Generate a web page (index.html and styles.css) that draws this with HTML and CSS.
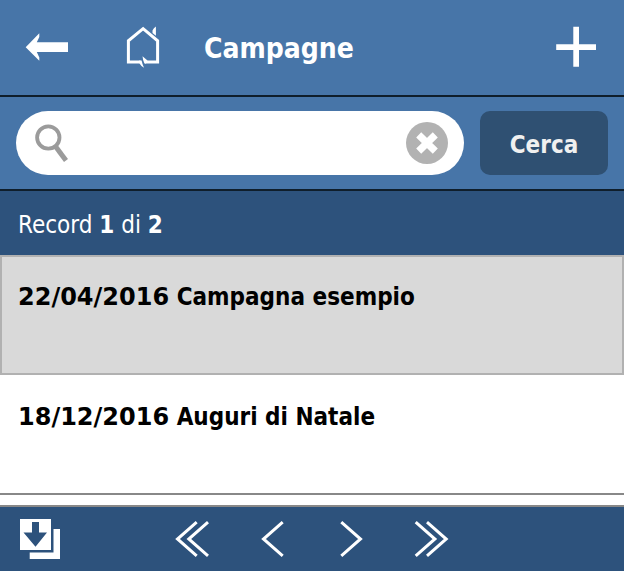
FILE: index.html
```html
<!DOCTYPE html>
<html lang="it">
<head>
<meta charset="utf-8">
<meta name="viewport" content="width=device-width, initial-scale=1">
<title>Campagne</title>
<link rel="stylesheet" href="styles.css">
</head>
<body>
<header class="topbar">
  <button class="icon-button" type="button" aria-label="Indietro">
    <svg width="60" height="48" viewBox="0 0 60 48"><path fill="#fff" d="M1.7 24.3 15.3 10.3V14L12.8 19.3H44V29H12.8L15.3 34.5V37.7Z"/></svg>
  </button>
  <button class="icon-button" type="button" aria-label="Home">
    <svg width="48" height="48" viewBox="0 0 48 48">
      <path fill="none" stroke="#fff" stroke-width="3" d="M20.5 39H8.4V17.8L23.1 5.6 37.6 17.8V39H25"/>
      <path fill="#fff" d="M22.5 33.2 27.5 37.6 26 40.5H24.4Q22.8 36.6 22.5 33.2ZM19.2 37.5H21.6Q22.4 41.5 24 44.8Q21 43.2 19.4 40.2ZM35.9 3.6V12.8L32.5 10V7.4Q33.6 5.4 35.9 3.6Z"/>
    </svg>
  </button>
  <h1 class="title">Campagne</h1>
  <button class="icon-button add" type="button" aria-label="Aggiungi">
    <svg width="48" height="48" viewBox="0 0 48 48"><path fill="#fff" d="M21.3 3.8H27V21.2H44V27H27V43.8H21.3V27H4.2V21.2H21.3Z"/></svg>
  </button>
</header>
<form class="search">
  <div class="field">
    <svg class="lens" width="36" height="40" viewBox="0 0 36 40" fill="none" stroke="#9b9b9b"><circle cx="14.3" cy="14.5" r="11.2" stroke-width="3.8"/><path stroke-width="5" d="M21 22.7 32 37.5"/></svg>
    <input class="query" type="text" aria-label="Cerca campagne">
    <button class="icon-button" type="reset" aria-label="Cancella">
      <svg width="42" height="42" viewBox="0 0 42 42"><circle cx="21" cy="21" r="21" fill="#b2b2b2"/><path stroke="#fff" stroke-width="7.2" d="M12.7 12.9 29.3 29.1M29.3 12.9 12.7 29.1"/></svg>
    </button>
  </div>
  <button class="submit" type="submit">Cerca</button>
</form>
<p class="status">Record <b>1</b> di <b>2</b></p>
<main class="records">
  <a class="record selected" href="#campagna-esempio"><span class="date">22/04/2016</span> Campagna esempio</a>
  <a class="record" href="#auguri-di-natale"><span class="date">18/12/2016</span> Auguri di Natale</a>
</main>
<footer class="toolbar">
  <button class="icon-button download" type="button" aria-label="Scarica">
    <svg width="44" height="44" viewBox="0 0 44 44"><path fill="#fff" fill-rule="evenodd" d="M2 2H33V33H2ZM14 5V15.5H5.5L17.5 29.8 29 15.5H21V5ZM35.5 12H42V42H11.7V35.5H35.5Z"/></svg>
  </button>
  <button class="icon-button" type="button" aria-label="Prima pagina">
    <svg class="chevron" width="36" height="44" viewBox="0 0 36 44"><path d="M22.7 5.2 3.5 22 22.7 38.8M34 5.2 14.8 22 34 38.8"/></svg>
  </button>
  <button class="icon-button" type="button" aria-label="Pagina precedente">
    <svg class="chevron" width="36" height="44" viewBox="0 0 36 44"><path d="M28.7 5.2 9.5 22 28.7 38.8"/></svg>
  </button>
  <button class="icon-button" type="button" aria-label="Pagina successiva">
    <svg class="chevron" width="36" height="44" viewBox="0 0 36 44"><path d="M7.3 5.2 26.5 22 7.3 38.8"/></svg>
  </button>
  <button class="icon-button" type="button" aria-label="Ultima pagina">
    <svg class="chevron" width="36" height="44" viewBox="0 0 36 44"><path d="M1.7 5.2 20.9 22 1.7 38.8M13 5.2 32.2 22 13 38.8"/></svg>
  </button>
</footer>
</body>
</html>
```
FILE: styles.css
```css
* {
  box-sizing: border-box;
}

body {
  margin: 0;
  min-height: 100vh;
  display: flex;
  flex-direction: column;
  background: #fff;
  color: #000;
  font: 24px/32px Tahoma, "DejaVu Sans Condensed", "Noto Sans", sans-serif;
}

button {
  font: inherit;
}

svg {
  display: block;
}

.icon-button {
  padding: 0;
  border: 0;
  background: none;
  cursor: pointer;
}

.topbar {
  display: flex;
  align-items: center;
  gap: 36px;
  padding: 23px 24px 24px;
  background: #4775a8;
  border-bottom: 2px solid #0f1e2b;
}

.title {
  margin: 0;
  padding-top: 4px;
  font-size: 28px;
  font-weight: bold;
  color: #fff;
}

.add {
  margin-left: auto;
}

.search {
  display: flex;
  gap: 16px;
  padding: 14px 16px;
  background: #4775a8;
  border-bottom: 2px solid #0f1e2b;
}

.field {
  flex: 1;
  min-width: 0;
  height: 64px;
  display: flex;
  align-items: center;
  gap: 8px;
  padding: 0 16px 0 18px;
  border-radius: 32px;
  background: #fff;
}

.query {
  flex: 1;
  min-width: 0;
  padding: 0;
  border: 0;
  outline: 0;
  background: none;
  font: inherit;
}

.submit {
  width: 128px;
  padding: 4px 0 0;
  border: 0;
  border-radius: 10px;
  background: #2f5072;
  color: #f0f0f0;
  font-weight: bold;
}

.status {
  margin: 0;
  padding: 18px 18px 14px;
  background: #2d527c;
  color: #fff;
}

.records {
  flex: 1;
}

.record {
  display: block;
  min-height: 120px;
  padding: 26px 18px;
  border-bottom: 2px solid #888;
  color: #000;
  font-weight: bold;
  text-decoration: none;
}

.date {
  font-family: "DejaVu Sans", Verdana, sans-serif;
}

.selected {
  padding: 24px 16px;
  border: 2px solid #b1b1b1;
  background: #d9d9d9;
}

.toolbar {
  display: flex;
  gap: 44px;
  padding: 10px 18px;
  background: #2d527c;
  border-top: 2px solid #888;
}

.download {
  margin-right: 68px;
}

.chevron {
  fill: none;
  stroke: #fff;
  stroke-width: 3;
}
```
